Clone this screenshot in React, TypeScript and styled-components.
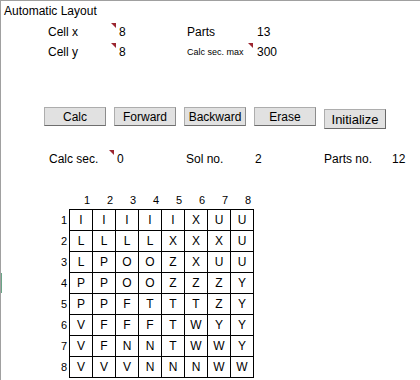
import React from "react";
import styled, { createGlobalStyle } from "styled-components";

const GlobalStyle = createGlobalStyle`
   html, body {
      margin: 0;
      padding: 0;
      background: #ffffff;
   }
   body {
      font-family: "Liberation Sans", Arial, sans-serif;
      color: #000000;
   }
`;

const BOARD = [
   "IIIIIXUU",
   "LLLLXXXU",
   "LPOOZXUU",
   "PPOOZZZY",
   "PPFTTTZY",
   "VFFFTWYY",
   "VFNNTWWY",
   "VVVNNNWW",
];

const BUTTONS = ["Calc", "Forward", "Backward", "Erase"];

function App() {
   return (
      <>
         <GlobalStyle />
         <Sheet>
            <SelectionMark />
            <Title>Automatic Layout</Title>

            <ParamRow>
               <Label>Cell x</Label>
               <Value note>8</Value>
               <Label>Parts</Label>
               <Value2>13</Value2>
            </ParamRow>
            <ParamRow>
               <Label>Cell y</Label>
               <Value note>8</Value>
               <SmallLabel>Calc sec. max</SmallLabel>
               <Value2 note>300</Value2>
            </ParamRow>

            <ButtonBar>
               {BUTTONS.map((b) => (
                  <Button key={b}>{b}</Button>
               ))}
               <Button raised>Initialize</Button>
            </ButtonBar>

            <StatsRow>
               <Label>Calc sec.</Label>
               <Value note>0</Value>
               <Label>Sol no.</Label>
               <Label>2</Label>
               <Label>Parts no.</Label>
               <Label>12</Label>
            </StatsRow>

            <Board>
               <HeaderRow>
                  <Corner />
                  {BOARD[0].split("").map((_, i) => (
                     <ColHead key={i}>{i + 1}</ColHead>
                  ))}
               </HeaderRow>
               <BoardBody>
                  <RowHeads>
                     {BOARD.map((_, i) => (
                        <RowHead key={i}>{i + 1}</RowHead>
                     ))}
                  </RowHeads>
                  <CellGrid>
                     {BOARD.map((row, r) =>
                        row.split("").map((ch, c) => (
                           <Cell key={`${r}-${c}`}>{ch}</Cell>
                        ))
                     )}
                  </CellGrid>
               </BoardBody>
            </Board>
         </Sheet>
      </>
   );
}

export default App;

type NoteProps = {
   note?: boolean;
};

type ButtonProps = {
   raised?: boolean;
};

const Sheet = styled.div`
   position: relative;
   width: 419px;
   height: 379px;
   border-top: 1px solid #a0a0a0;
   border-left: 1px solid #a0a0a0;
   overflow: hidden;
   font-size: 12px;
`;

const SelectionMark = styled.div`
   position: absolute;
   left: -1px;
   top: 272px;
   width: 2px;
   height: 20px;
   background: #6aa587;
`;

const Title = styled.div`
   height: 21px;
   line-height: 21px;
   padding-left: 3px;
`;

const ParamRow = styled.div`
   display: grid;
   grid-template-columns: 63px 76px 61px auto;
   height: 20px;
   line-height: 20px;
   padding-left: 47px;
`;

const Label = styled.div`
   white-space: nowrap;
`;

const SmallLabel = styled.div`
   font-size: 9px;
   white-space: nowrap;
`;

const Value = styled.div<NoteProps>`
   position: relative;
   padding-left: 8px;
   &::before {
      content: "";
      display: ${({ note }) => (note ? "block" : "none")};
      position: absolute;
      left: 0;
      top: 1px;
      border-top: 5px solid #9c2630;
      border-left: 5px solid transparent;
   }
`;

const Value2 = styled(Value)`
   padding-left: 9px;
`;

const ButtonBar = styled.div`
   display: flex;
   align-items: flex-start;
   gap: 8px;
   margin-top: 45px;
   padding-left: 43px;
`;

const Button = styled.button<ButtonProps>`
   box-sizing: border-box;
   width: 62px;
   height: ${({ raised }) => (raised ? "20px" : "19px")};
   margin-top: ${({ raised }) => (raised ? "2px" : "0")};
   padding: 0;
   font-family: "Liberation Sans", Arial, sans-serif;
   font-size: ${({ raised }) => (raised ? "13px" : "12px")};
   color: #000000;
   background: #e1e1e1;
   border: 1px solid #adadad;
   border-right-color: ${({ raised }) => (raised ? "#696969" : "#8c8c8c")};
   border-bottom-color: ${({ raised }) => (raised ? "#696969" : "#6e6e6e")};
   border-radius: 0;
`;

const StatsRow = styled.div`
   display: grid;
   grid-template-columns: 60px 77px 69px 69px 68px auto;
   height: 20px;
   line-height: 20px;
   margin-top: 20px;
   padding-left: 48px;
`;

const Board = styled.div`
   margin-top: 22px;
   padding-left: 52px;
`;

const HeaderRow = styled.div`
   display: flex;
   height: 18px;
   line-height: 18px;
   font-size: 11px;
`;

const Corner = styled.div`
   width: 17px;
`;

const ColHead = styled.div`
   width: 23px;
   box-sizing: border-box;
   text-align: right;
   padding-right: 3px;
`;

const BoardBody = styled.div`
   display: flex;
`;

const RowHeads = styled.div`
   display: flex;
   flex-direction: column;
   width: 16px;
   padding-top: 1px;
   font-size: 11px;
`;

const RowHead = styled.div`
   height: 21px;
   line-height: 21px;
   text-align: right;
   padding-right: 2px;
`;

const CellGrid = styled.div`
   display: grid;
   grid-template-columns: repeat(8, 22px);
   grid-auto-rows: 20px;
   gap: 1px;
   padding: 1px;
   background: #000000;
`;

const Cell = styled.div`
   background: #ffffff;
   text-align: center;
   line-height: 20px;
   font-size: 12px;
`;
